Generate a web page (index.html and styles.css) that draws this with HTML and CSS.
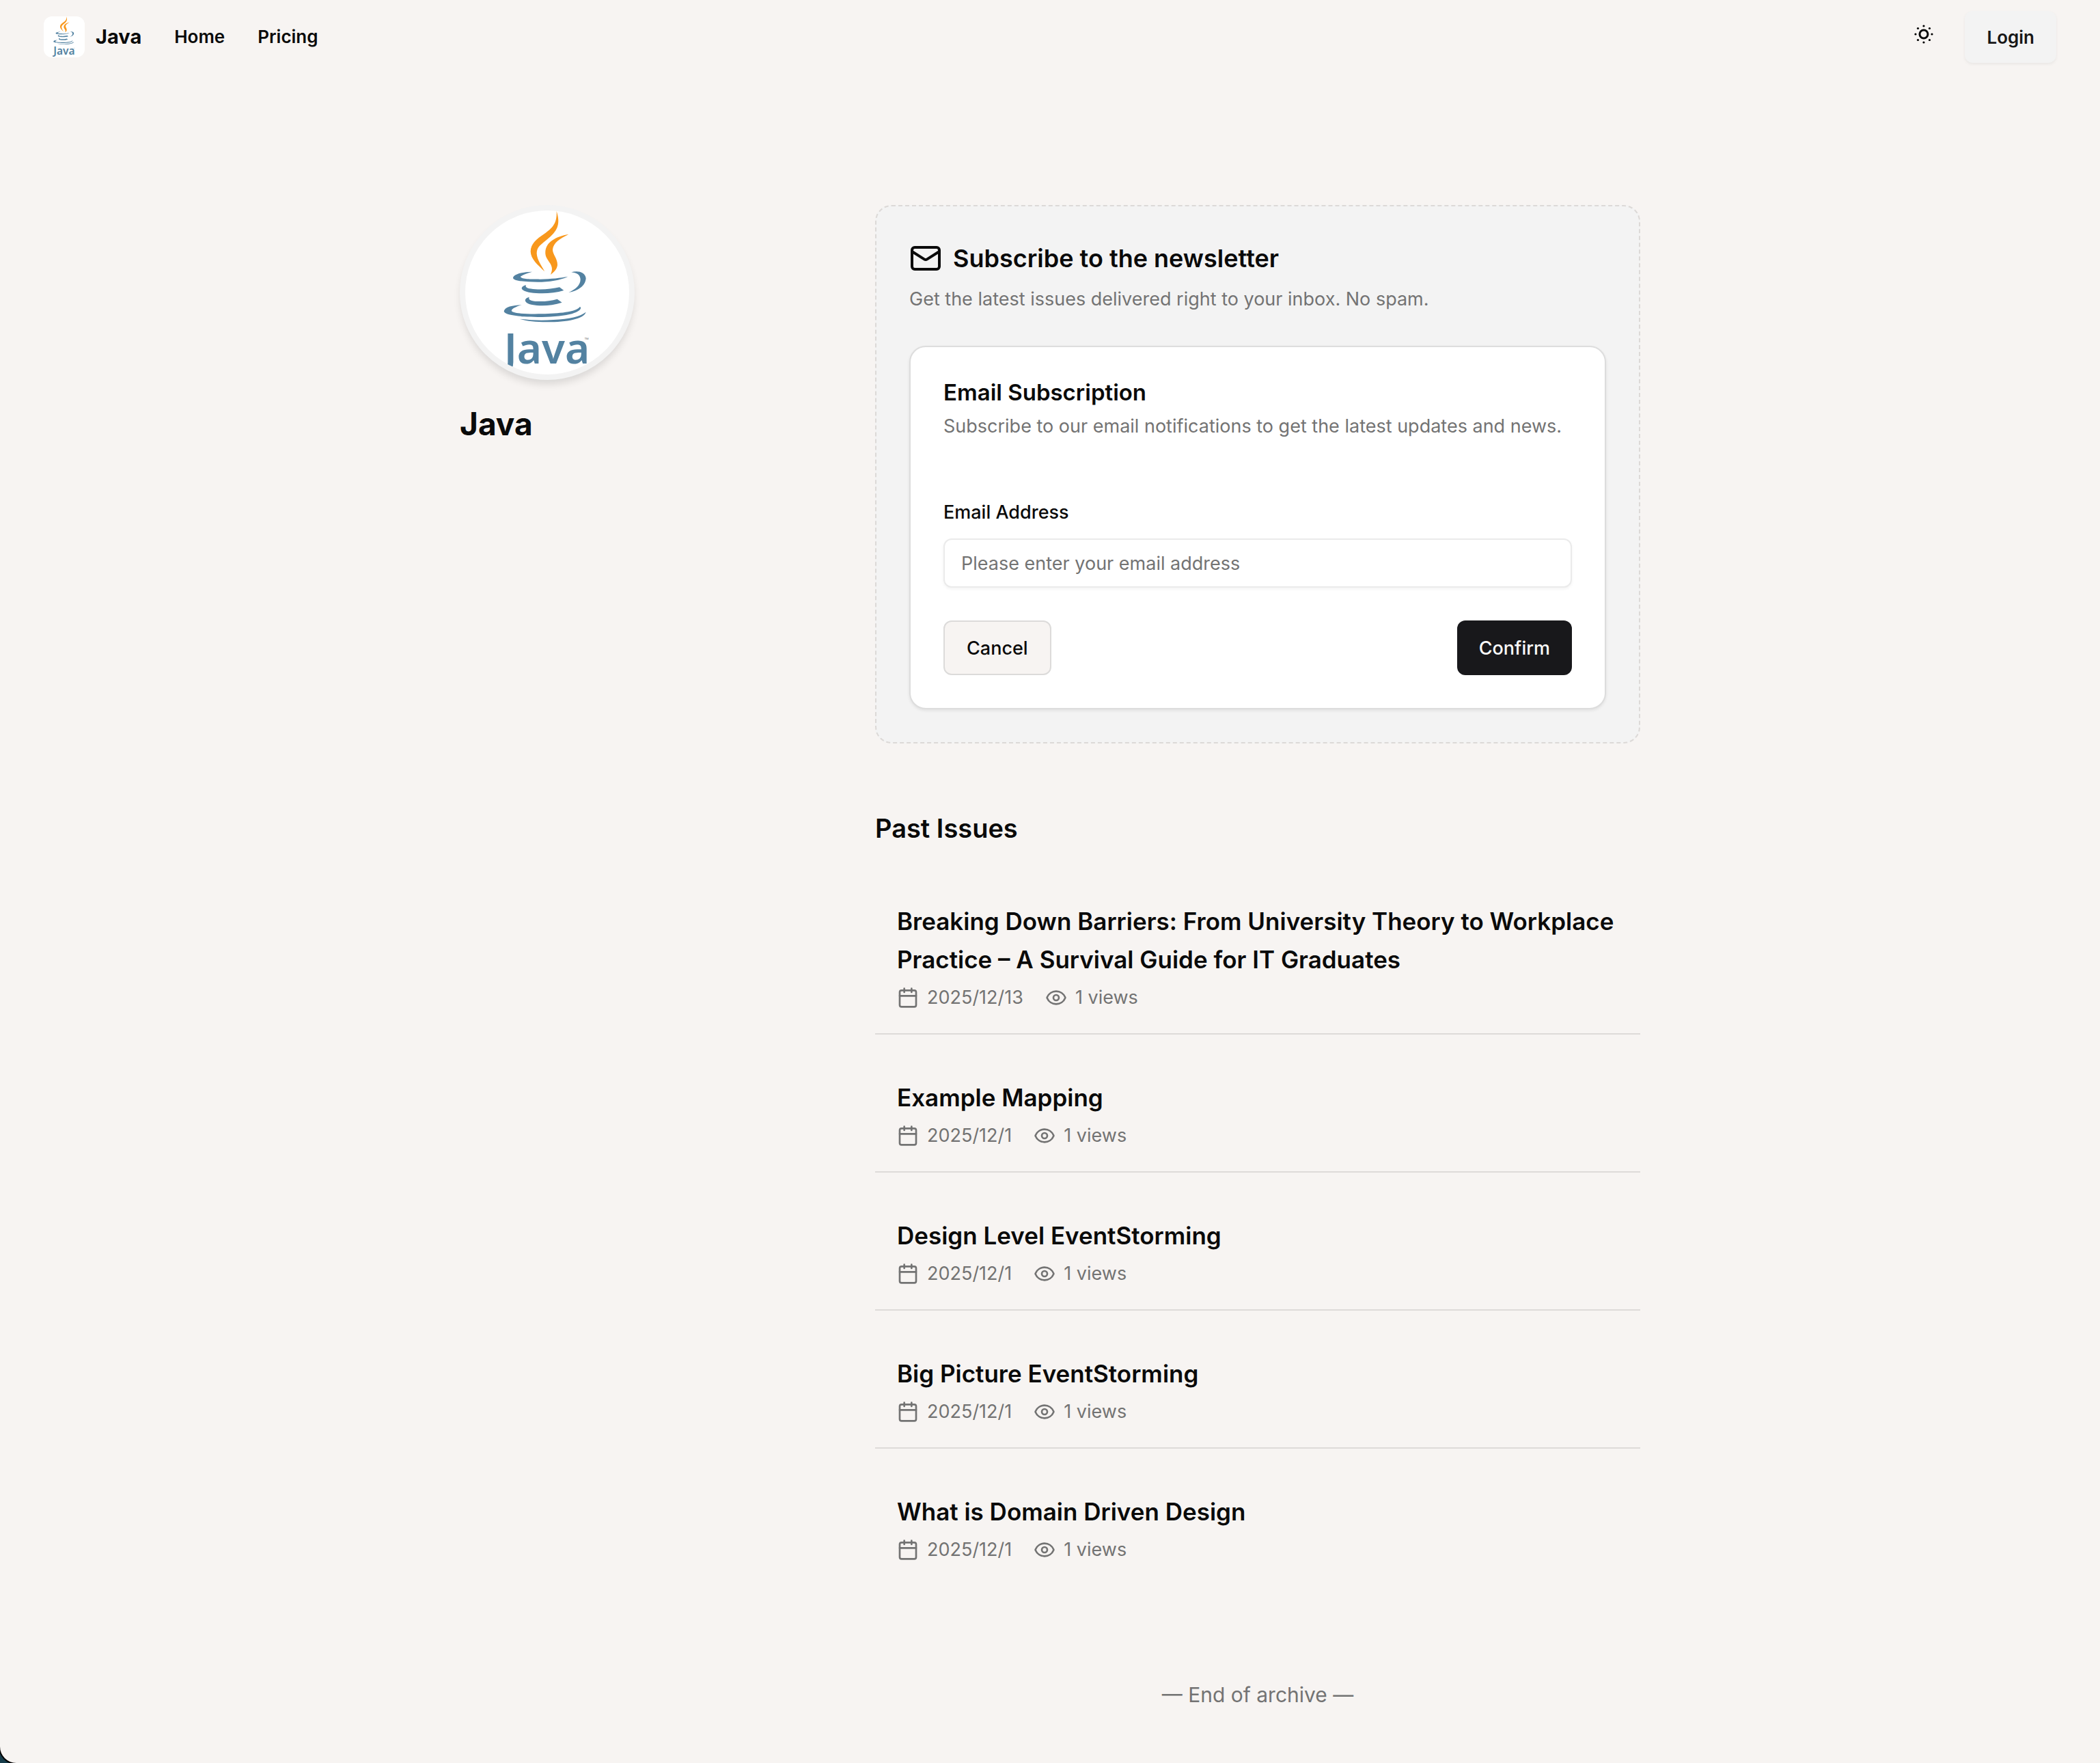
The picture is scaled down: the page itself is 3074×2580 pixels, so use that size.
FILE: index.html
```html
<!DOCTYPE html>
<html lang="en">
  <head>
    <meta charset="UTF-8" />
    <meta name="viewport" content="width=device-width, initial-scale=1.0" />
    <title>Java</title>
    <link rel="stylesheet" href="styles.css">
  </head>
  <body>
    <!-- shared icons -->
    <svg class="sprite" aria-hidden="true">
      <symbol id="java-logo" viewBox="62 54 720 720">
        <g fill="#f8981d">
          <path d="M463 57C480 110 470 140 430 174C392 206 376 214 376 243C378 270 393 290 411 322C380 292 350 268 349 234C350 200 374 180 410 156C446 130 466 110 463 57Z" />
          <path d="M516 159C480 176 448 196 446 226C446 248 468 266 467 294C464 314 452 324 437 336C444 318 446 306 436 288C424 268 412 258 414 234C418 192 460 168 516 159Z" />
        </g>
        <g fill="#5382a1">
          <path d="M356 323C330 330 306 340 305 346C310 356 350 356 390 356C440 355 480 350 513 344C480 360 430 368 380 368C320 368 272 362 272 350C274 334 310 324 356 323Z" />
          <path d="M528 325C556 316 590 324 592 352C590 386 556 408 516 414C546 400 568 382 568 356C566 334 550 328 528 325Z" />
          <path d="M329 381C324 392 334 398 370 400C410 402 446 398 476 391L495 405C450 420 390 420 350 415C308 408 296 392 329 381Z" />
          <path d="M343 434C338 446 350 452 380 453C410 454 440 451 466 443L487 458C440 474 390 474 356 468C318 460 318 440 343 434Z" />
          <path d="M310 469C284 476 262 488 266 496C276 508 340 509 400 508C470 506 550 500 566 476C578 486 556 502 520 510C470 522 380 524 320 520C270 516 232 510 232 496C236 478 270 470 310 469Z" />
          <path d="M592 500C584 530 510 544 420 544C370 544 330 540 301 530C350 536 400 538 450 534C520 530 566 520 592 500Z" />
        </g>
        <text class="logo-word" x="232" y="727">Java</text>
        <text class="logo-tm" x="586" y="630">™</text>
      </symbol>
      <symbol id="icon-calendar" viewBox="0 0 24 24">
        <path d="M8 2v4M16 2v4M3 10h18" />
        <rect x="3" y="4" width="18" height="18" rx="2" />
      </symbol>
      <symbol id="icon-eye" viewBox="0 0 24 24">
        <path d="M2.06 12.35a1 1 0 0 1 0-.7 10.75 10.75 0 0 1 19.88 0 1 1 0 0 1 0 .7 10.75 10.75 0 0 1-19.88 0" />
        <circle cx="12" cy="12" r="3" />
      </symbol>
    </svg>

    <header class="navbar">
      <nav class="nav-links">
        <a class="brand" href="#">
          <svg class="brand-logo" aria-hidden="true"><use href="#java-logo" /></svg>
          <span>Java</span>
        </a>
        <a href="#">Home</a>
        <a href="#">Pricing</a>
      </nav>
      <div class="nav-actions">
        <button class="theme-toggle" type="button" aria-label="Toggle theme">
          <svg viewBox="0 0 30 30" aria-hidden="true">
            <circle class="sun-ring" cx="15" cy="15" r="6" />
            <circle cx="15" cy="3" r="1.6" />
            <circle cx="15" cy="27" r="1.6" />
            <circle cx="3" cy="15" r="1.6" />
            <circle cx="27" cy="15" r="1.6" />
            <circle cx="6.5" cy="6.5" r="1.6" />
            <circle cx="23.5" cy="6.5" r="1.6" />
            <circle cx="6.5" cy="23.5" r="1.6" />
            <circle cx="23.5" cy="23.5" r="1.6" />
          </svg>
        </button>
        <button class="login" type="button">Login</button>
      </div>
    </header>

    <main class="layout">
      <aside class="profile">
        <svg class="avatar" aria-hidden="true"><use href="#java-logo" /></svg>
        <h1>Java</h1>
      </aside>

      <div class="content">
        <section class="subscribe">
          <h2>
            <svg class="icon-mail" viewBox="0 0 24 24" aria-hidden="true">
              <rect x="2" y="4" width="20" height="16" rx="2" />
              <path d="m22 7-8.97 5.7a1.94 1.94 0 0 1-2.06 0L2 7" />
            </svg>
            Subscribe to the newsletter
          </h2>
          <p class="muted">Get the latest issues delivered right to your inbox. No spam.</p>

          <form class="email-card">
            <h3>Email Subscription</h3>
            <p class="muted">Subscribe to our email notifications to get the latest updates and news.</p>
            <label for="email">Email Address</label>
            <input type="email" id="email" name="email" placeholder="Please enter your email address" />
            <div class="form-actions">
              <button class="btn btn-outline" type="button">Cancel</button>
              <button class="btn btn-primary" type="submit">Confirm</button>
            </div>
          </form>
        </section>

        <section class="issues">
          <h2>Past Issues</h2>
          <article class="issue">
            <h3><a href="#">Breaking Down Barriers: From University Theory to Workplace Practice – A Survival Guide for IT Graduates</a></h3>
            <div class="meta">
              <span><svg aria-hidden="true"><use href="#icon-calendar" /></svg>2025/12/13</span>
              <span><svg aria-hidden="true"><use href="#icon-eye" /></svg>1 views</span>
            </div>
          </article>
          <article class="issue">
            <h3><a href="#">Example Mapping</a></h3>
            <div class="meta">
              <span><svg aria-hidden="true"><use href="#icon-calendar" /></svg>2025/12/1</span>
              <span><svg aria-hidden="true"><use href="#icon-eye" /></svg>1 views</span>
            </div>
          </article>
          <article class="issue">
            <h3><a href="#">Design Level EventStorming</a></h3>
            <div class="meta">
              <span><svg aria-hidden="true"><use href="#icon-calendar" /></svg>2025/12/1</span>
              <span><svg aria-hidden="true"><use href="#icon-eye" /></svg>1 views</span>
            </div>
          </article>
          <article class="issue">
            <h3><a href="#">Big Picture EventStorming</a></h3>
            <div class="meta">
              <span><svg aria-hidden="true"><use href="#icon-calendar" /></svg>2025/12/1</span>
              <span><svg aria-hidden="true"><use href="#icon-eye" /></svg>1 views</span>
            </div>
          </article>
          <article class="issue">
            <h3><a href="#">What is Domain Driven Design</a></h3>
            <div class="meta">
              <span><svg aria-hidden="true"><use href="#icon-calendar" /></svg>2025/12/1</span>
              <span><svg aria-hidden="true"><use href="#icon-eye" /></svg>1 views</span>
            </div>
          </article>
        </section>

        <p class="archive-end">— End of archive —</p>
      </div>
    </main>
  </body>
</html>
```
FILE: styles.css
```css
* {
  box-sizing: border-box;
}
html {
  background-color: #163c4a;
}
body {
  margin: 0;
  min-height: 100vh;
  background-color: #f7f4f2;
  border-bottom-left-radius: 24px;
  box-shadow: 0 0 0 2px #000;
  color: #0a0a0a;
  font-family: Inter, "Liberation Sans", sans-serif;
  font-size: 27px;
  line-height: 40px;
}
h1,
h2,
h3,
p {
  margin: 0;
}
h1 {
  font-size: 46px;
  line-height: 64px;
  font-weight: 700;
}
h2 {
  font-size: 38px;
  line-height: 56px;
  font-weight: 600;
}
a {
  color: inherit;
  text-decoration: none;
}
button {
  font-family: inherit;
  cursor: pointer;
}
.sprite {
  position: absolute;
  width: 0;
  height: 0;
}
.muted {
  color: #737373;
}

/* top bar */
.navbar {
  display: flex;
  align-items: center;
  justify-content: space-between;
  height: 108px;
  padding: 0 64px;
  font-size: 26px;
  font-weight: 600;
}
.nav-links,
.nav-actions,
.brand {
  display: flex;
  align-items: center;
}
.nav-links {
  gap: 48px;
}
.brand {
  gap: 16px;
  font-size: 29px;
  font-weight: 700;
}
.brand-logo {
  width: 60px;
  height: 60px;
  border-radius: 12px;
  background-color: #fff;
}
.nav-actions {
  gap: 40px;
}
.theme-toggle {
  display: flex;
  padding: 0 5px 8px;
  border: none;
  background: none;
}
.theme-toggle svg {
  width: 30px;
  height: 30px;
}
.sun-ring {
  fill: none;
  stroke: #0a0a0a;
  stroke-width: 3;
}
.login {
  height: 76px;
  padding: 0 32px;
  border: none;
  border-radius: 12px;
  background-color: #f3f3f3;
  box-shadow: 0 2px 4px rgba(0, 0, 0, 0.06);
  color: #171717;
  font-size: 26px;
  font-weight: 600;
}

/* two column layout */
.layout {
  display: grid;
  grid-template-columns: repeat(3, 1fr);
  gap: 96px;
  max-width: 1728px;
  margin: 0 auto;
  padding: 192px 0 76px;
}
.content {
  grid-column: span 2;
}
.avatar {
  display: block;
  width: 256px;
  height: 256px;
  margin-bottom: 32px;
  border: 8px solid #f3f3f3;
  border-radius: 50%;
  background-color: #fff;
  box-shadow: 0 8px 12px -2px rgba(0, 0, 0, 0.12);
}
.logo-word {
  fill: #5382a1;
  font-family: "Noto Sans", sans-serif;
  font-size: 186px;
  font-weight: 600;
}
.logo-tm {
  fill: #8a8a8a;
  font-family: "Noto Sans", sans-serif;
  font-size: 24px;
}

/* newsletter box */
.subscribe {
  padding: 48px;
  border: 2px dashed #dcd9d7;
  border-radius: 24px;
  background-color: #f3f3f3;
}
.subscribe h2 {
  display: flex;
  align-items: center;
  gap: 16px;
  margin-bottom: 12px;
  font-size: 36px;
}
.icon-mail {
  width: 48px;
  height: 48px;
}
.icon-mail,
.meta svg {
  fill: none;
  stroke: currentColor;
  stroke-width: 2;
  stroke-linecap: round;
  stroke-linejoin: round;
}
.email-card {
  margin-top: 48px;
  padding: 48px;
  border: 2px solid #dddddd;
  border-radius: 24px;
  background-color: #fff;
  box-shadow: 0 2px 4px rgba(0, 0, 0, 0.08);
}
.email-card h3 {
  margin-bottom: 12px;
  font-size: 33px;
  line-height: 36px;
  font-weight: 600;
}
.email-card label {
  display: block;
  margin: 86px 0 18px;
  font-weight: 500;
}
.email-card input {
  display: block;
  width: 100%;
  height: 72px;
  padding: 0 24px;
  border: 2px solid #ebebeb;
  border-radius: 12px;
  background-color: #fff;
  box-shadow: 0 2px 4px rgba(0, 0, 0, 0.05);
  font-family: inherit;
  font-size: 27px;
}
.email-card input::placeholder {
  color: #737373;
}
.form-actions {
  display: flex;
  justify-content: space-between;
  margin-top: 48px;
}
.btn {
  height: 80px;
  padding: 0 32px;
  border: 2px solid #dcdbda;
  border-radius: 12px;
  font-size: 27px;
  font-weight: 500;
}
.btn-outline {
  background-color: #f7f4f2;
  color: #0a0a0a;
}
.btn-primary {
  border: none;
  background-color: #18181b;
  color: #fafafa;
}

/* archive list */
.issues {
  margin-top: 96px;
}
.issues > h2 {
  margin-bottom: 16px;
}
.issue {
  padding: 64px 32px 32px;
  border-bottom: 2px solid #dddad8;
}
.issue:last-child {
  border-bottom: none;
}
.issue h3 {
  margin-bottom: 8px;
  font-size: 35px;
  line-height: 56px;
  font-weight: 600;
}
.meta {
  display: flex;
  gap: 32px;
  color: #737373;
}
.meta span {
  display: flex;
  align-items: center;
  gap: 12px;
}
.meta svg {
  width: 32px;
  height: 32px;
}
.archive-end {
  margin-top: 136px;
  color: #737373;
  font-size: 30px;
  line-height: 48px;
  text-align: center;
}
```
